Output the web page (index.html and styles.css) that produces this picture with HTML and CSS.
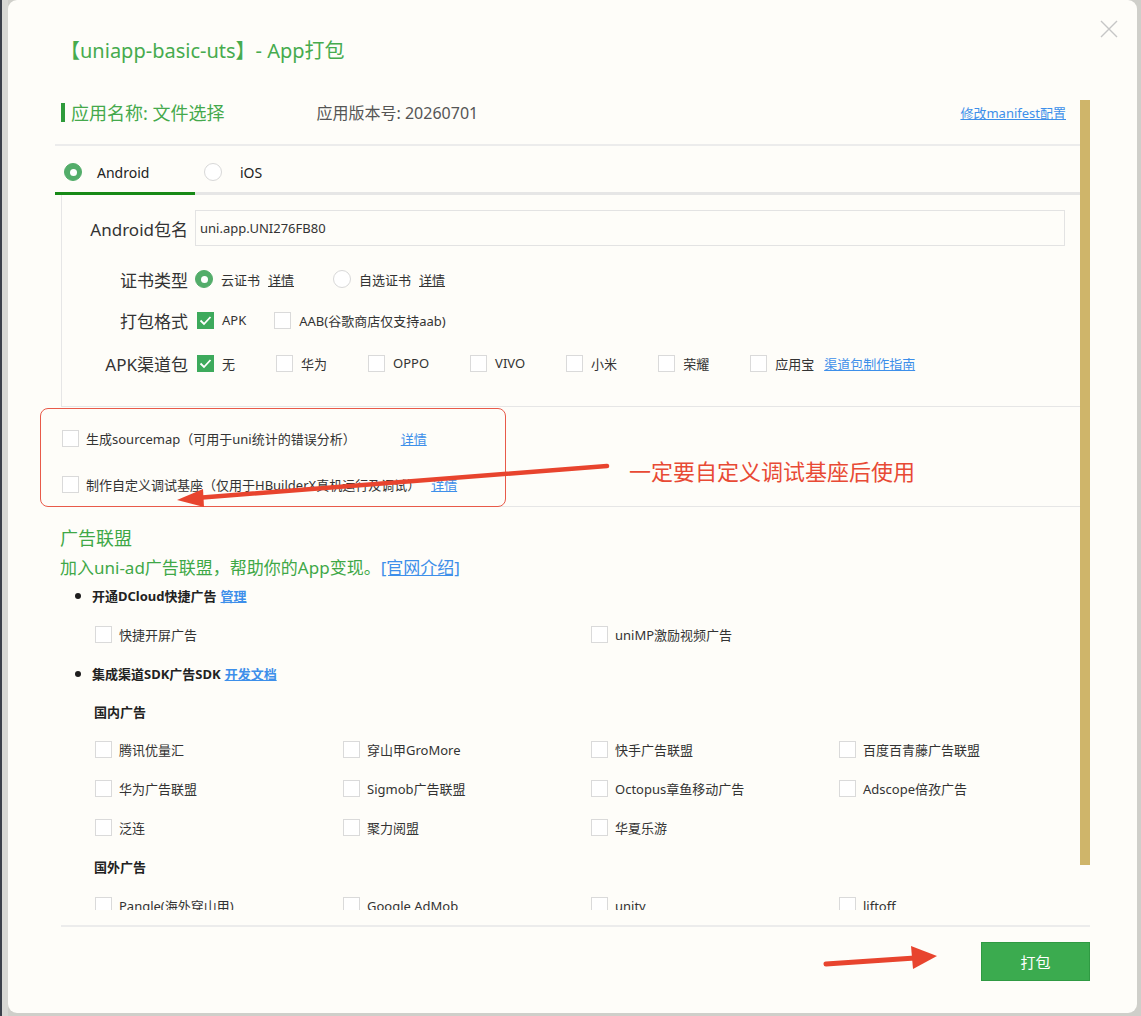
FILE: index.html
```html
<!DOCTYPE html>
<html lang="zh-CN">
<head>
<meta charset="utf-8">
<title>App打包</title>
<link rel="stylesheet" href="styles.css">
</head>
<body>
<div class="page">
  <div class="strip"></div>
  <div class="dialog">
    <button class="close" aria-label="关闭">
      <svg width="18" height="18" viewBox="0 0 18 18"><path d="M1 1 L17 17 M17 1 L1 17" stroke="#c6c6c6" stroke-width="1.4" fill="none"/></svg>
    </button>
    <h1 class="title">【uniapp-basic-uts】- App打包</h1>

    <div class="body">
      <div class="scroll">
        <div class="app-row">
          <span class="app-bar"></span>
          <span class="app-name">应用名称: 文件选择</span>
          <span class="app-ver">应用版本号: 20260701</span>
          <a class="link app-link">修改manifest配置</a>
        </div>
        <div class="divider"></div>

        <div class="tabs">
          <div class="tab active"><span class="radio on"></span><span class="tab-label">Android</span></div>
          <div class="tab"><span class="radio"></span><span class="tab-label ios">iOS</span></div>
        </div>

        <div class="panel">
          <div class="frow">
            <label class="flabel">Android包名</label>
            <input class="finput" type="text" value="uni.app.UNI276FB80">
          </div>
          <div class="frow cert">
            <label class="flabel">证书类型</label>
            <div class="opts gap39">
              <span class="opt"><span class="radio on"></span><span class="otext">云证书</span><a class="link otext">详情</a></span>
              <span class="opt"><span class="radio"></span><span class="otext">自选证书</span><a class="link otext">详情</a></span>
            </div>
          </div>
          <div class="frow fmt">
            <label class="flabel">打包格式</label>
            <div class="opts gap28 cbs">
              <span class="opt"><span class="cb on"><svg viewBox="0 0 17 17" width="17" height="17"><path d="M3.5 8.5 L7 12 L13.5 5" stroke="#fff" stroke-width="1.8" fill="none"/></svg></span><span class="otext">APK</span></span>
              <span class="opt"><span class="cb"></span><span class="otext">AAB(谷歌商店仅支持aab)</span></span>
            </div>
          </div>
          <div class="frow chan">
            <label class="flabel">APK渠道包</label>
            <div class="opts gap41 cbs">
              <span class="opt"><span class="cb on"><svg viewBox="0 0 17 17" width="17" height="17"><path d="M3.5 8.5 L7 12 L13.5 5" stroke="#fff" stroke-width="1.8" fill="none"/></svg></span><span class="otext">无</span></span>
              <span class="opt"><span class="cb"></span><span class="otext">华为</span></span>
              <span class="opt"><span class="cb"></span><span class="otext">OPPO</span></span>
              <span class="opt"><span class="cb"></span><span class="otext">VIVO</span></span>
              <span class="opt"><span class="cb"></span><span class="otext">小米</span></span>
              <span class="opt"><span class="cb"></span><span class="otext">荣耀</span></span>
              <span class="opt"><span class="cb"></span><span class="otext">应用宝</span><a class="link guide">渠道包制作指南</a></span>
            </div>
          </div>
        </div>

        <div class="sm">
          <div class="sm-row"><span class="cb"></span><span class="sm-text">生成sourcemap（可用于uni统计的错误分析）</span><a class="link sm-link1">详情</a></div>
          <div class="sm-row"><span class="cb"></span><span class="sm-text">制作自定义调试基座（仅用于HBuilderX真机运行及调试）</span><a class="link sm-link2">详情</a></div>
        </div>

        <div class="ad">
          <div class="ad-title">广告联盟</div>
          <div class="ad-intro">加入uni-ad广告联盟，帮助你的App变现。<a class="link">[官网介绍]</a></div>
          <div class="ad-row bullet-row"><span class="dot"></span><b class="bt">开通DCloud快捷广告</b><a class="link bl">管理</a></div>
          <div class="ad-grid">
            <span class="gi"><span class="cb"></span><span class="otext">快捷开屏广告</span></span>
            <span class="gi"></span>
            <span class="gi"><span class="cb"></span><span class="otext">uniMP激励视频广告</span></span>
            <span class="gi"></span>
          </div>
          <div class="ad-row bullet-row"><span class="dot"></span><b class="bt">集成渠道SDK广告SDK</b><a class="link bl">开发文档</a></div>
          <div class="ad-row sub short">国内广告</div>
          <div class="ad-grid">
            <span class="gi"><span class="cb"></span><span class="otext">腾讯优量汇</span></span>
            <span class="gi"><span class="cb"></span><span class="otext">穿山甲GroMore</span></span>
            <span class="gi"><span class="cb"></span><span class="otext">快手广告联盟</span></span>
            <span class="gi"><span class="cb"></span><span class="otext">百度百青藤广告联盟</span></span>
            <span class="gi"><span class="cb"></span><span class="otext">华为广告联盟</span></span>
            <span class="gi"><span class="cb"></span><span class="otext">Sigmob广告联盟</span></span>
            <span class="gi"><span class="cb"></span><span class="otext">Octopus章鱼移动广告</span></span>
            <span class="gi"><span class="cb"></span><span class="otext">Adscope倍孜广告</span></span>
            <span class="gi"><span class="cb"></span><span class="otext">泛连</span></span>
            <span class="gi"><span class="cb"></span><span class="otext">聚力阅盟</span></span>
            <span class="gi"><span class="cb"></span><span class="otext">华夏乐游</span></span>
            <span class="gi"></span>
          </div>
          <div class="ad-row sub">国外广告</div>
          <div class="ad-grid">
            <span class="gi"><span class="cb"></span><span class="otext">Pangle(海外穿山甲)</span></span>
            <span class="gi"><span class="cb"></span><span class="otext">Google AdMob</span></span>
            <span class="gi"><span class="cb"></span><span class="otext">unity</span></span>
            <span class="gi"><span class="cb"></span><span class="otext">liftoff</span></span>
          </div>
        </div>
      </div>
      <div class="scrollbar"><div class="thumb"></div></div>
    </div>

    <div class="footer">
      <button class="pack">打包</button>
    </div>
  </div>

  <div class="redbox"></div>
  <div class="note">一定要自定义调试基座后使用</div>
  <svg class="annot" width="1141" height="1016" viewBox="0 0 1141 1016">
    <line x1="607" y1="466" x2="196" y2="498" stroke="#e8442e" stroke-width="4.5" stroke-linecap="round"/>
    <polygon points="177,500 203,489 204,507" fill="#e8442e"/>
    <line x1="826" y1="964" x2="915" y2="958" stroke="#e8442e" stroke-width="5" stroke-linecap="round"/>
    <polygon points="937,956 911,946 913,969" fill="#e8442e"/>
  </svg>
</div>
</body>
</html>
```

FILE: styles.css
```css
* { box-sizing: border-box; }
html, body { margin: 0; padding: 0; }
body {
  width: 1141px;
  height: 1016px;
  overflow: hidden;
  background: #cfcfca;
  font-family: "Noto Sans", "Noto Sans CJK SC", sans-serif;
  color: #333;
}
.page { position: relative; width: 1141px; height: 1016px; display: flex; align-items: flex-start; }
.strip { width: 8px; height: 1016px; background: #d8d8d4; border-left: 2px solid #3b404a; }

.dialog {
  position: relative;
  width: 1129px;
  height: 1013px;
  background: #fefdf9;
  border-radius: 9px;
  padding: 0 47px 0 47px;
}
.close {
  position: absolute;
  left: 1092px;
  top: 20px;
  width: 18px;
  height: 18px;
  padding: 0;
  border: 0;
  background: none;
}
.close svg { display: block; }
.title {
  margin: 0 0 0 5px;
  padding-top: 37px;
  height: 100px;
  font-size: 20px;
  line-height: 28px;
  font-weight: normal;
  color: #46ab4e;
}

.body { display: flex; height: 810px; }
.scroll { flex: 1; overflow: hidden; }
.scrollbar { width: 10px; }
.thumb { height: 765px; background: #cfb56a; }

.link { color: #3d8fea; text-decoration: underline; cursor: pointer; }

.app-row { display: flex; align-items: center; height: 24px; padding: 0 14px 0 6px; }
.app-bar { width: 4px; height: 19px; background: #2e9b3b; margin-right: 6px; }
.app-name { font-size: 18px; color: #45a94c; }
.app-ver { font-size: 16px; color: #555; margin-left: 92px; }
.app-link { margin-left: auto; font-size: 13px; }
.divider { margin-top: 20px; height: 2px; background: #ececec; }

.tabs { display: flex; height: 49px; border-bottom: 3px solid #e6e6e6; }
.tab { width: 140px; display: flex; align-items: center; padding: 6px 0 0 9px; }
.tab.active { border-bottom: 3px solid #178a17; margin-bottom: -3px; }
.tab-label { font-size: 14px; color: #222; margin-left: 15px; }
.tab-label.ios { margin-left: 18px; }

.radio {
  flex: none;
  width: 18px;
  height: 18px;
  border-radius: 50%;
  border: 1.5px solid #d8d8d8;
  background: #fff;
  display: inline-flex;
  align-items: center;
  justify-content: center;
}
.radio.on { background: #53ad6a; border-color: #53ad6a; }
.radio.on::after { content: ""; width: 7px; height: 7px; border-radius: 50%; background: #fff; }

.cb {
  flex: none;
  width: 17px;
  height: 17px;
  border: 1px solid #dadada;
  background: #fff;
  display: inline-block;
}
.cb.on { background: #3daa5c; border-color: #3daa5c; }
.cb svg { display: block; margin: -1px; }

.panel {
  margin-left: 6px;
  border-left: 1px solid #e6e6e6;
  border-bottom: 1px solid #e6e6e6;
  padding: 15px 15px 27px 0;
}
.frow { display: flex; align-items: center; height: 32px; }
.frow:first-child { height: 36px; }
.frow.cert { margin-top: 17px; }
.frow.fmt { margin-top: 9px; }
.frow.chan { margin-top: 11px; }
.flabel { width: 126px; margin-right: 7px; text-align: right; font-size: 17px; color: #333; }
.finput {
  flex: 1;
  height: 36px;
  border: 1px solid #e3e3e3;
  background: #fefdf9;
  font-family: inherit;
  font-size: 13px;
  color: #333;
  padding: 0 0 0 4px;
  outline: none;
}
.opts { display: flex; align-items: center; }
.opts.cbs { margin-left: 2px; }
.gap39 { gap: 39px; }
.gap28 { gap: 28px; }
.gap41 { gap: 41px; }
.opt { display: inline-flex; align-items: center; }
.otext { font-size: 13px; color: #333; margin-left: 8px; }
.guide { font-size: 13px; margin-left: 10px; }

.sm { padding: 21px 0 12px 7px; border-bottom: 1px solid #e6e6e6; }
.sm-row { display: flex; align-items: center; height: 20px; }
.sm-row + .sm-row { margin-top: 26px; }
.sm-text { font-size: 13px; color: #333; margin-left: 7px; }
.sm-link1 { font-size: 13px; margin-left: 45px; }
.sm-link2 { font-size: 13px; margin-left: 11px; }

.ad { padding-left: 5px; }
.ad-title { margin-top: 19px; font-size: 18px; line-height: 24px; color: #3fa847; }
.ad-intro { margin-top: 8px; margin-bottom: -2px; font-size: 17px; line-height: 20px; color: #3fa847; }
.ad-intro .link { color: #3d8fea; }
.ad-row { height: 39px; display: flex; align-items: center; }
.ad-row.short { height: 37px; }
.bullet-row { padding-left: 15px; }
.dot { width: 6px; height: 6px; border-radius: 50%; background: #1e1e1e; margin-right: 11px; }
.bt { font-size: 13px; color: #222; font-weight: bold; }
.bl { font-size: 13px; margin-left: 4px; font-weight: bold; }
.sub { padding-left: 34px; font-size: 13px; font-weight: bold; color: #222; }
.ad-grid { display: grid; grid-template-columns: repeat(4, 248px); grid-auto-rows: 39px; margin-left: 35px; }
.gi { display: flex; align-items: center; }
.gi .otext { margin-left: 7px; }

.footer {
  margin-left: 6px;
  margin-top: 15px;
  border-top: 2px solid #ececec;
  padding-top: 15px;
  display: flex;
  justify-content: flex-end;
}
.pack {
  width: 109px;
  height: 39px;
  background: #3bab4f;
  border: 1px solid #2f9a43;
  color: #fff;
  font-family: inherit;
  font-size: 15px;
  padding: 0;
}

.redbox {
  position: absolute;
  left: 40px;
  top: 408px;
  width: 466px;
  height: 99px;
  border: 1px solid #e85a4a;
  border-radius: 8px;
  pointer-events: none;
}
.note {
  position: absolute;
  left: 629px;
  top: 456px;
  font-size: 22px;
  line-height: 30px;
  color: #e84a35;
}
.annot { position: absolute; left: 0; top: 0; pointer-events: none; }
```
